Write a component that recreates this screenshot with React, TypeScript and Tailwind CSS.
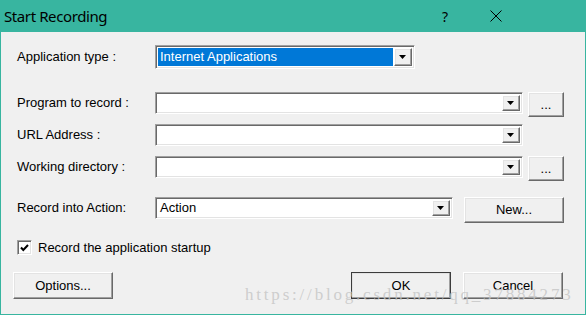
import React from "react"

const sunken =
  "border border-t-[#a0a0a0] border-l-[#a0a0a0] border-b-white border-r-white shadow-[inset_1px_1px_0_#696969,inset_-1px_-1px_0_#e3e3e3]"
const raised =
  "border border-t-white border-l-white border-b-[#696969] border-r-[#696969] shadow-[inset_-1px_-1px_0_#a0a0a0,inset_1px_1px_0_#e3e3e3] bg-[#f0f0f0]"

function Arrow() {
  return (
    <div className={`w-[18px] h-full flex items-center justify-center shrink-0 ${raised}`}>
      <svg width="8" height="4" viewBox="0 0 8 4">
        <path d="M0 0 H7 L3.5 4 Z" fill="#000" />
      </svg>
    </div>
  )
}

function Combo({ width, value }: { width: string; value?: string }) {
  return (
    <div className={`${width} h-[22px] bg-white flex p-[2px] ${sunken}`}>
      <div className="flex-1 flex items-center pl-[2px] text-black">{value}</div>
      <Arrow />
    </div>
  )
}

function Btn({ label, className = "", isDefault }: { label: string; className?: string; isDefault?: boolean }) {
  return (
    <div
      className={`${className} flex items-center justify-center text-black ${
        isDefault ? "outline outline-1 outline-[#3c3c3c] -outline-offset-1 " + raised : raised
      }`}
    >
      {label}
    </div>
  )
}

export default function App() {
  return (
    <div className="w-[586px] h-[315px] bg-[#38b5a0] flex flex-col font-['Liberation_Sans',Arial,sans-serif] relative overflow-hidden">
      {/* Title bar */}
      <div className="h-[32px] flex items-center shrink-0">
        <span className="pl-[4px] text-[15px] text-black font-['Noto_Sans',sans-serif] tracking-[-0.4px]">
          Start Recording
        </span>
        <span className="ml-auto mr-[42px] text-[14px] text-black font-['Noto_Sans',sans-serif]">?</span>
        <svg width="12" height="12" viewBox="0 0 12 12" className="mr-[84px]">
          <path d="M0.5 0.5 L11.5 11.5 M11.5 0.5 L0.5 11.5" stroke="#000" strokeWidth="1" />
        </svg>
      </div>

      {/* Body */}
      <div className="flex-1 mx-[1px] mb-[1px] bg-[#f0f0f0] flex flex-col text-[13px] text-black">
        <div className="flex items-center h-[24px] mt-[13px] pl-[16px]">
          <span className="w-[138px]">Application type :</span>
          <div className={`w-[260px] h-[24px] bg-white flex p-[2px] ${sunken}`}>
            <div className="flex-1 flex items-center pl-[2px] bg-[#0078d7] text-white mr-[1px]">
              Internet Applications
            </div>
            <Arrow />
          </div>
        </div>

        <div className="flex items-start h-[25px] mt-[23px] pl-[16px]">
          <span className="w-[138px] h-[22px] flex items-center">Program to record :</span>
          <Combo width="w-[368px]" />
          <Btn label="..." className="w-[36px] h-[25px] ml-[5px]" />
        </div>

        <div className="flex items-start h-[22px] mt-[7px] pl-[16px]">
          <span className="w-[138px] h-[22px] flex items-center">URL Address :</span>
          <Combo width="w-[368px]" />
        </div>

        <div className="flex items-start h-[25px] mt-[10px] pl-[16px]">
          <span className="w-[138px] h-[22px] flex items-center">Working directory :</span>
          <Combo width="w-[368px]" />
          <Btn label="..." className="w-[36px] h-[25px] ml-[5px]" />
        </div>

        <div className="flex items-start h-[26px] mt-[16px] pl-[16px]">
          <span className="w-[138px] h-[22px] flex items-center">Record into Action:</span>
          <Combo width="w-[298px]" value="Action" />
          <Btn label="New..." className="w-[100px] h-[26px] ml-[11px]" />
        </div>

        <div className="flex items-center h-[15px] mt-[17px] pl-[16px]">
          <div className={`w-[15px] h-[15px] bg-white flex items-center justify-center ${sunken}`}>
            <svg width="9" height="8" viewBox="0 0 9 8">
              <path d="M1 3.5 L3.3 6 L8 1" stroke="#000" strokeWidth="2" fill="none" />
            </svg>
          </div>
          <span className="ml-[6px]">Record the application startup</span>
        </div>

        <div className="flex items-start h-[27px] mt-[17px] pl-[12px]">
          <Btn label="Options..." className="w-[100px] h-[27px]" />
          <Btn label="OK" className="w-[100px] h-[27px] ml-[238px]" isDefault />
          <Btn label="Cancel" className="w-[100px] h-[27px] ml-[12px]" />
        </div>
      </div>

      {/* watermark */}
      <div className="absolute left-[245px] top-[282px] text-[17px] tracking-[2.8px] text-[#c4c4c4]/80 font-['Liberation_Serif',serif] pointer-events-none">
        https://blog.csdn.net/qq_37884273
      </div>
    </div>
  )
}
